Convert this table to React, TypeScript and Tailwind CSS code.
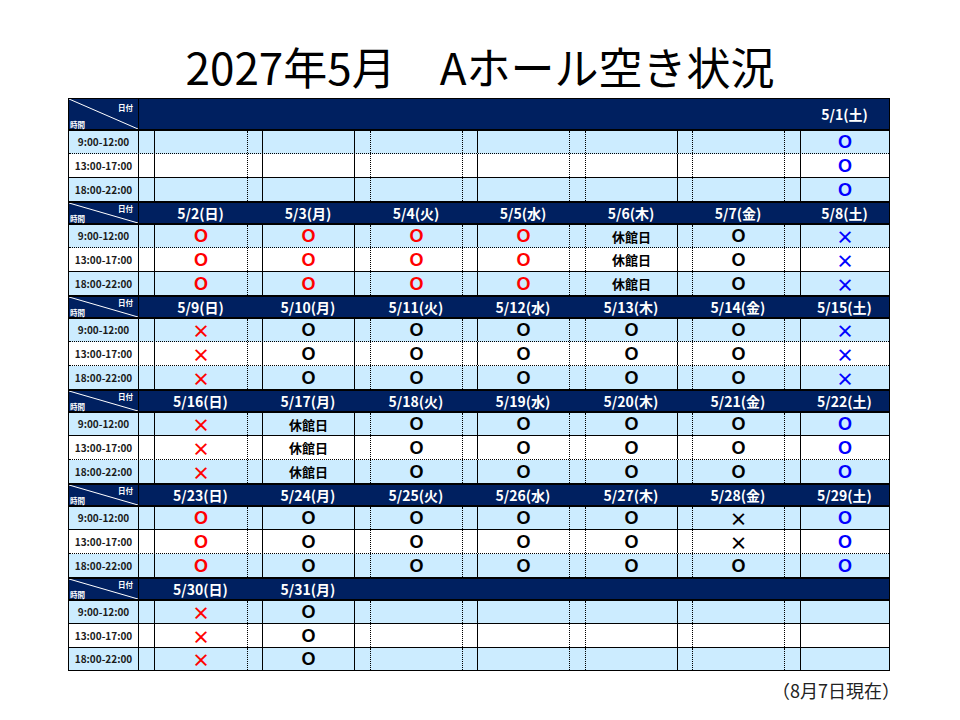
import React from "react";

type Mark = "" | "rO" | "bO" | "kO" | "rX" | "bX" | "kX" | "休";

const NW = ["w-[15px]", "w-[15px]", "w-[16px]", "w-[15px]", "w-[16px]", "w-[15px]", "w-[16px]"];
const CW = ["w-[93px]", "w-[92px]", "w-[92px]", "w-[92px]", "w-[92px]", "w-[92px]", "w-[89px]"];
// left border style for cells 1..13 (cell 0 follows label border)
const LB = ["S", "D", "S", "S", "D", "D", "S", "D", "D", "S", "D", "D", "S"];

type Block = {
  dates: string[];
  rows: Mark[][];
  seps: ["S" | "D", "S" | "D"];
  first?: boolean;
  last?: boolean;
};

const blocks: Block[] = [
  {
    dates: ["", "", "", "", "", "", "5/1(土)"],
    rows: [
      ["", "", "", "", "", "", "bO"],
      ["", "", "", "", "", "", "bO"],
      ["", "", "", "", "", "", "bO"],
    ],
    seps: ["D", "S"],
    first: true,
  },
  {
    dates: ["5/2(日)", "5/3(月)", "5/4(火)", "5/5(水)", "5/6(木)", "5/7(金)", "5/8(土)"],
    rows: [
      ["rO", "rO", "rO", "rO", "休", "kO", "bX"],
      ["rO", "rO", "rO", "rO", "休", "kO", "bX"],
      ["rO", "rO", "rO", "rO", "休", "kO", "bX"],
    ],
    seps: ["D", "S"],
  },
  {
    dates: ["5/9(日)", "5/10(月)", "5/11(火)", "5/12(水)", "5/13(木)", "5/14(金)", "5/15(土)"],
    rows: [
      ["rX", "kO", "kO", "kO", "kO", "kO", "bX"],
      ["rX", "kO", "kO", "kO", "kO", "kO", "bX"],
      ["rX", "kO", "kO", "kO", "kO", "kO", "bX"],
    ],
    seps: ["D", "D"],
  },
  {
    dates: ["5/16(日)", "5/17(月)", "5/18(火)", "5/19(水)", "5/20(木)", "5/21(金)", "5/22(土)"],
    rows: [
      ["rX", "休", "kO", "kO", "kO", "kO", "bO"],
      ["rX", "休", "kO", "kO", "kO", "kO", "bO"],
      ["rX", "休", "kO", "kO", "kO", "kO", "bO"],
    ],
    seps: ["S", "D"],
  },
  {
    dates: ["5/23(日)", "5/24(月)", "5/25(火)", "5/26(水)", "5/27(木)", "5/28(金)", "5/29(土)"],
    rows: [
      ["rO", "kO", "kO", "kO", "kO", "kX", "bO"],
      ["rO", "kO", "kO", "kO", "kO", "kX", "bO"],
      ["rO", "kO", "kO", "kO", "kO", "kO", "bO"],
    ],
    seps: ["S", "D"],
  },
  {
    dates: ["5/30(日)", "5/31(月)", "", "", "", "", ""],
    rows: [
      ["rX", "kO", "", "", "", "", ""],
      ["rX", "kO", "", "", "", "", ""],
      ["rX", "kO", "", "", "", "", ""],
    ],
    seps: ["S", "S"],
    last: true,
  },
];

const TIMES = ["9:00-12:00", "13:00-17:00", "18:00-22:00"];

function MarkView({ m }: { m: Mark }) {
  if (m === "") return null;
  if (m === "休") return <span className="block text-[13px] font-bold text-black leading-none">休館日</span>;
  const color = m[0] === "r" ? "text-[#ff0000]" : m[0] === "b" ? "text-[#0000ff]" : "text-black";
  if (m[1] === "O")
    return (
      <span className={`block ${color} font-['Liberation_Sans',sans-serif] text-[18px] font-bold leading-none`}>O</span>
    );
  return <span className={`block ${color} text-[18px] font-bold leading-none`}>×</span>;
}

function HeaderLabel({ tall }: { tall: boolean }) {
  return (
    <div className="relative w-[70px] h-full border-r border-black flex flex-col justify-between pl-[1px] pr-[5px] pt-[2px] pb-[1px]">
      <svg className="absolute inset-0 w-full h-full" viewBox="0 0 70 100" preserveAspectRatio="none">
        <line x1="0" y1="0" x2="70" y2="100" stroke="white" strokeWidth="1" vectorEffect="non-scaling-stroke" />
      </svg>
      <span className={`block self-end text-[7.5px] font-bold text-white leading-none ${tall ? "mt-[3px]" : ""}`}>日付</span>
      <span className="block self-start text-[7.5px] font-bold text-white leading-none">時間</span>
    </div>
  );
}

function BlockView({ b }: { b: Block }) {
  const rowH = b.last ? ["h-[23px]", "h-[24px]", "h-[22px]"] : ["h-[23px]", "h-[24px]", "h-[23px]"];
  return (
    <div>
      <div
        className={`flex bg-[#002060] border-black ${
          b.first ? "h-[32px] border-b-2" : "h-[24px] border-t-2 border-b-2"
        }`}
      >
        <HeaderLabel tall={!!b.first} />
        {b.dates.map((d, i) => (
          <React.Fragment key={i}>
            <div className={`${NW[i]} h-full`} />
            <div className={`${CW[i]} h-full flex items-center justify-center`}>
              <span className="block text-[14px] font-bold text-white leading-none whitespace-nowrap">{d}</span>
            </div>
          </React.Fragment>
        ))}
      </div>
      {b.rows.map((row, r) => {
        const bg = r === 1 ? "bg-white" : "bg-[#ccecff]";
        const sep =
          r < 2
            ? b.seps[r] === "D"
              ? "border-b border-dotted border-black"
              : "border-b border-solid border-black"
            : "";
        return (
          <div key={r} className={`flex ${bg} ${rowH[r]} ${sep}`}>
            <div className="w-[70px] h-full border-r border-black flex items-center justify-center">
              <span className="block text-[10px] font-bold text-[#1a1a1a] leading-none">{TIMES[r]}</span>
            </div>
            {row.map((m, i) => {
              const nb =
                i === 0
                  ? ""
                  : LB[2 * i - 1] === "S"
                  ? "border-l border-solid border-black"
                  : "border-l border-dotted border-black";
              const cb = LB[2 * i] === "S" ? "border-l border-solid border-black" : "border-l border-dotted border-black";
              return (
                <React.Fragment key={i}>
                  <div className={`${NW[i]} h-full ${nb}`} />
                  <div className={`${CW[i]} h-full ${cb} flex items-center justify-center`}>
                    <MarkView m={m} />
                  </div>
                </React.Fragment>
              );
            })}
          </div>
        );
      })}
    </div>
  );
}

export default function App() {
  return (
    <div className="w-[960px] h-[720px] bg-white font-['Noto_Sans_CJK_JP','Noto_Sans',sans-serif] text-black">
      <div className="pt-[44px] h-[98px] flex justify-center">
        <h1 className="text-[44px] leading-[44px] font-normal whitespace-pre">2027年5月　Aホール空き状況</h1>
      </div>
      <div className="ml-[68px] w-[822px] border border-black">
        {blocks.map((b, i) => (
          <BlockView key={i} b={b} />
        ))}
      </div>
      <div className="w-[900px] flex justify-end mt-[10px]">
        <span className="text-[18px] leading-none text-[#222]">（8月7日現在）</span>
      </div>
    </div>
  );
}
